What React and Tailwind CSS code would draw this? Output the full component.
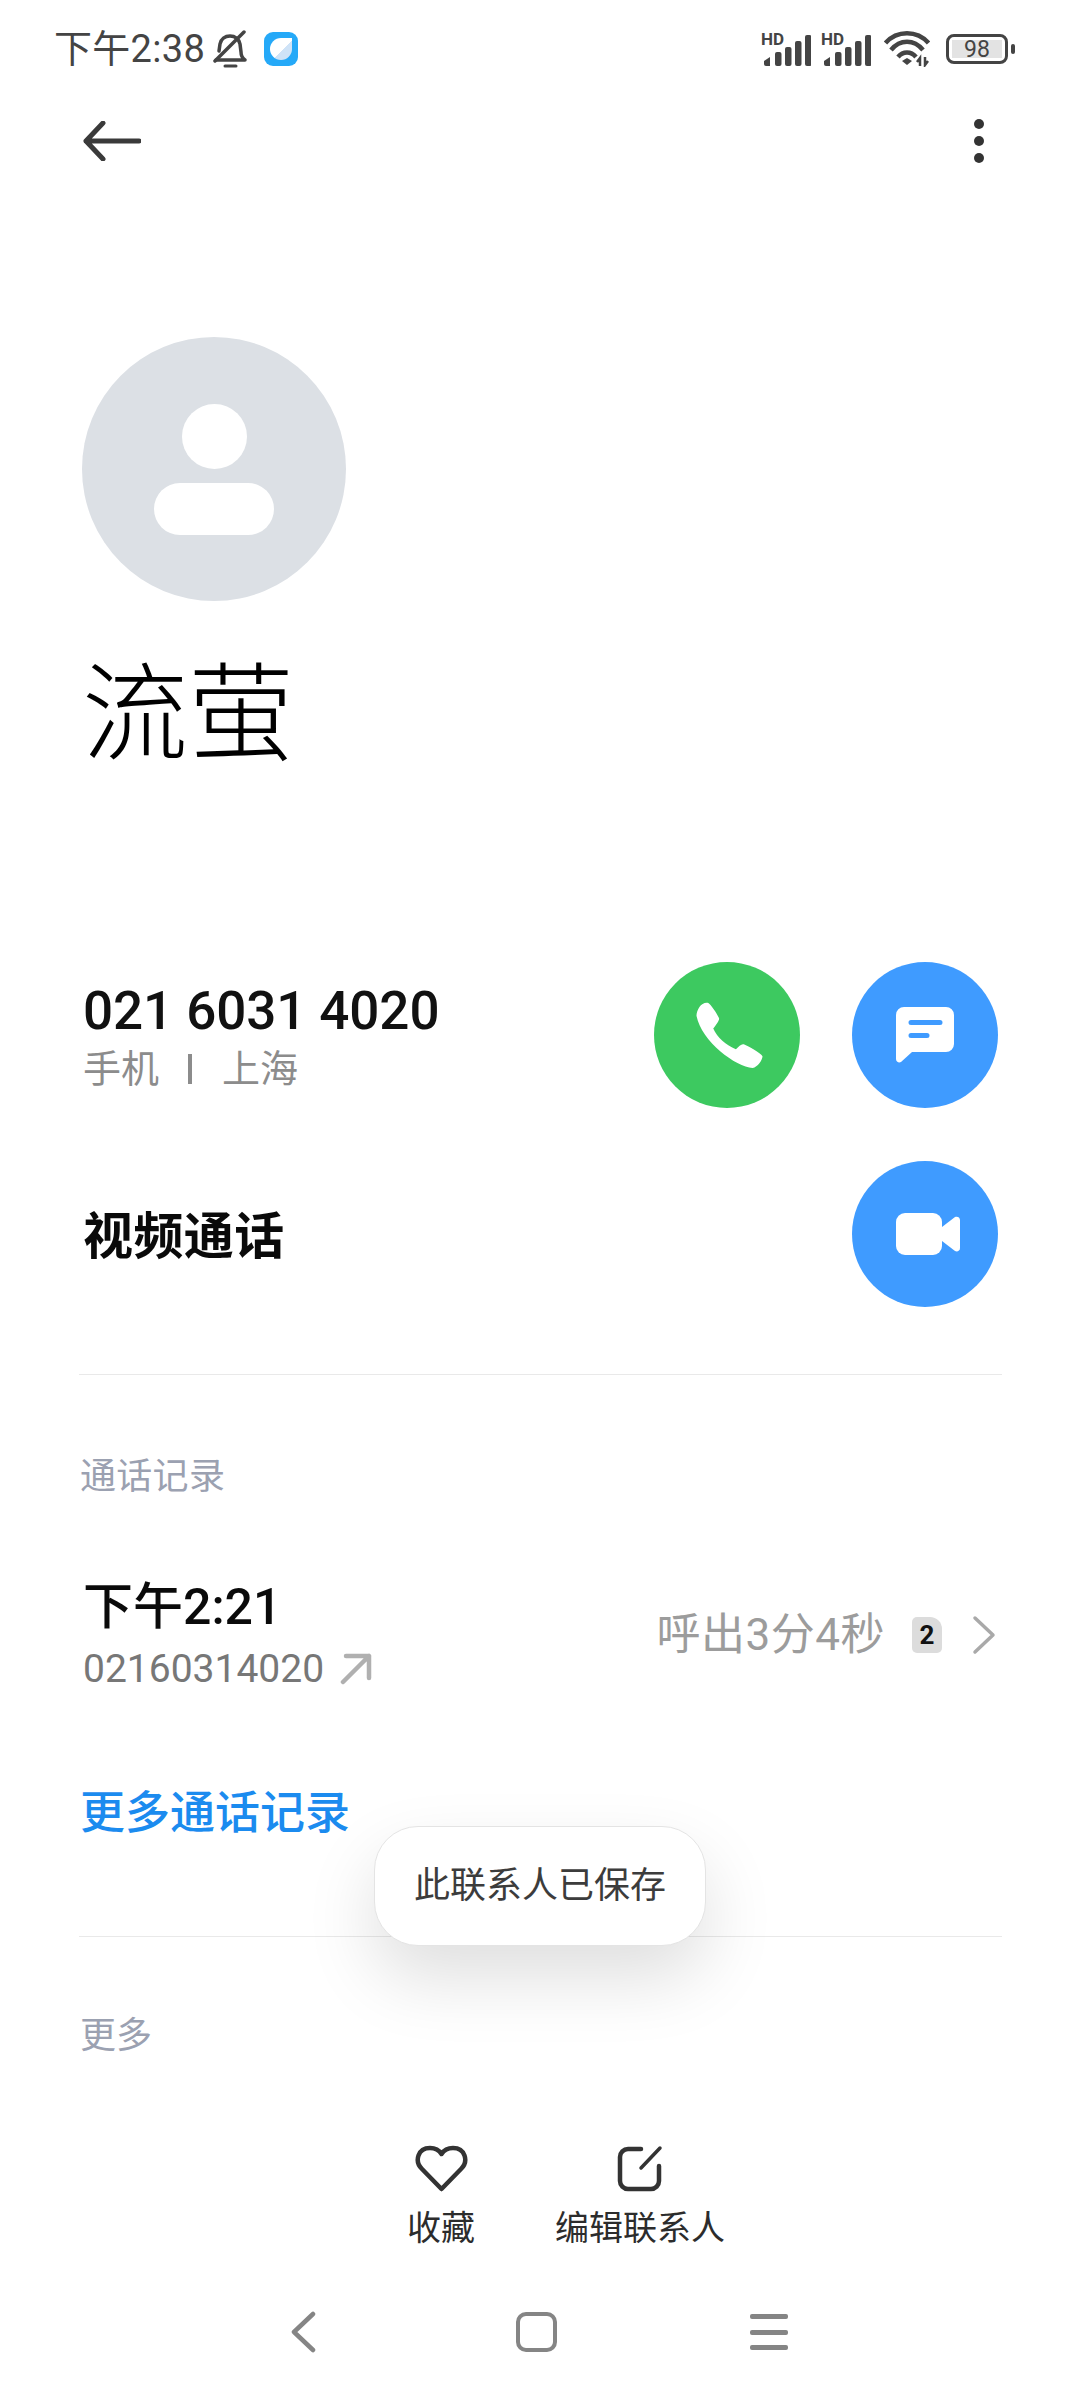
const cjk = "font-['Roboto','Noto_Sans_CJK_SC',sans-serif]";

function Signal() {
  return (
    <div className="relative w-[50px] h-[33px]">
      <span className="absolute left-0 top-[-3px] text-[17px] leading-[18px] font-bold text-[#444] font-['Roboto',sans-serif]">HD</span>
      <svg className="absolute inset-0" width="50" height="33" viewBox="0 0 50 33" fill="#444">
        <path d="M3 28l6-4v9H5a2 2 0 0 1-2-2z" />
        <rect x="14" y="19" width="6.500" height="14" rx="2" />
        <rect x="24" y="14" width="6.500" height="19" rx="2" />
        <rect x="34" y="8" width="6.500" height="25" rx="2" />
        <rect x="44" y="2" width="6.500" height="31" rx="2" />
      </svg>
    </div>
  );
}

function Wifi() {
  return (
    <svg width="46" height="36" viewBox="0 0 46 36" fill="none" stroke="#444" strokeWidth="4.500">
      <path d="M1.500 12C13 -1 33 -1 44.500 12" />
      <path d="M7 19C16 8 30 8 39 19" />
      <path d="M14 26C19 20 27 20 32 26" />
      <path d="M18 30l5-3 5 3-5 4z" fill="#444" stroke="none" />
      <path d="M36 35v-8l-3 4M41 26v8l3-4" strokeWidth="2.500" />
    </svg>
  );
}

function Battery() {
  return (
    <div className="flex items-center">
      <div className="w-[62px] h-[30px] rounded-[8px] border-[3.5px] border-[#444] p-[3px]">
        <div className="h-full bg-[#e3e3e3] flex items-center justify-center text-[23px] leading-none text-[#444] font-['Roboto',sans-serif]">98</div>
      </div>
      <div className="ml-[3px] w-[4px] h-[10px] rounded-[2px] bg-[#444]" />
    </div>
  );
}

function Round({ color, children }) {
  return <div className={`w-[146px] h-[146px] rounded-full flex items-center justify-center ${color}`}>{children}</div>;
}

export default function App() {
  return (
    <div className={`relative w-[1080px] h-[2400px] overflow-hidden bg-white ${cjk}`}>
      {/* status bar */}
      <div className="h-[98px] flex items-center justify-between pl-[54px] pr-[65px]">
        <div className="flex items-center">
          <span className="text-[38px] tracking-[0.3px] leading-none text-[#444]">下午2:38</span>
          <svg className="ml-[7px]" width="37" height="38" viewBox="0 0 35 38" fill="none" stroke="#444" strokeWidth="3.500" strokeLinecap="round" strokeLinejoin="round">
            <path d="M3 30h29c-3-2-4-5-4-8l-1-8c-1-5-5-8-10-8s-9 3-10 8l-1 7" />
            <path d="M2 31L31 2" />
            <path d="M12 36h11" strokeWidth="3" />
          </svg>
          <div className="ml-[15px] w-[34px] h-[34px] rounded-[9px] bg-[#25a9f8] flex items-center justify-center">
            <div className="w-[22px] h-[22px] rounded-full rounded-tr-[8px] bg-[linear-gradient(135deg,#ffffff_55%,#cfe3f7_55%)]" />
          </div>
        </div>
        <div className="flex items-center">
          <Signal />
          <div className="ml-[10px]"><Signal /></div>
          <div className="ml-[13px]"><Wifi /></div>
          <div className="ml-[16px]"><Battery /></div>
        </div>
      </div>

      {/* app bar */}
      <div className="h-[86px] flex items-center justify-between pl-[83px] pr-[96px]">
        <svg width="58" height="40" viewBox="0 0 58 40" fill="none" stroke="#3a3a3a" strokeWidth="5" strokeLinecap="round" strokeLinejoin="round">
          <path d="M56 20H3M20 2L3 20l17 18" />
        </svg>
        <div className="flex flex-col gap-[7px]">
          <div className="w-[10px] h-[10px] rounded-full bg-[#333]" />
          <div className="w-[10px] h-[10px] rounded-full bg-[#333]" />
          <div className="w-[10px] h-[10px] rounded-full bg-[#333]" />
        </div>
      </div>

      {/* avatar */}
      <div className="mt-[153px] ml-[82px] w-[264px] h-[264px] rounded-full bg-[#dce0e5] flex flex-col items-center">
        <div className="mt-[67px] ml-[1px] w-[65px] h-[65px] rounded-full bg-white" />
        <div className="mt-[14px] w-[120px] h-[52px] rounded-[26px] bg-white" />
      </div>

      {/* name */}
      <div className="mt-[54px] ml-[82px] h-[120px] flex items-center text-[106px] leading-none font-light text-black">流萤</div>

      {/* actions */}
      <div className="mt-[187px] pl-[83px] pr-[82px] flex items-center justify-between">
        <div className="pt-[2px]">
          <div className="text-[53px] leading-[62px] font-medium tracking-[-0.1px] text-[#111]">021 6031 4020</div>
          <div className="mt-[4px] flex items-center text-[38px] leading-[46px] text-[#8c8c8c]">
            <span>手机</span>
            <span className="ml-[29px] w-[4px] h-[30px] bg-[#8c8c8c]" />
            <span className="ml-[30px]">上海</span>
          </div>
        </div>
        <div className="flex gap-[52px]">
          <Round color="bg-[#3dc960]">
            <svg className="ml-[5px]" width="67" height="67" viewBox="0 0 67 68" fill="white">
              <path d="M3 5C5 2 9 0 12 1C14 2 22 13 23 17C23 19 20 23 17 27C21 36 30 44 40 48C43 45 46 42 48 43C53 45 65 52 67 55C67 59 62 66 57 67C40 66 5 40 0 14C0 11 1 8 3 5Z" />
            </svg>
          </Round>
          <Round color="bg-[#3f9bff]">
            <svg width="58" height="56" viewBox="0 0 58 56" fill="white">
              <path fillRule="evenodd" d="M8 0h42a8 8 0 0 1 8 8v29a8 8 0 0 1-8 8H16L5 55c-2 1-5 0-5-3V8a8 8 0 0 1 8-8zM15 13a2.500 2.500 0 0 0 0 5h29a2.500 2.500 0 0 0 0-5zM15 26a2.500 2.500 0 0 0 0 5h16a2.500 2.500 0 0 0 0-5z" />
            </svg>
          </Round>
        </div>
      </div>

      <div className="mt-[53px] pl-[83px] pr-[82px] flex items-center justify-between">
        <div className="pt-[6px] text-[50px] tracking-[0.4px] leading-[60px] font-semibold text-[#0a0a0a]">视频通话</div>
        <Round color="bg-[#3f9bff]">
          <svg className="ml-[5px]" width="64" height="42" viewBox="0 0 64 42" fill="white">
            <rect x="0" y="0" width="46" height="42" rx="9" />
            <path d="M46 14L59 4c2-1 5 0 5 3v28c0 3-3 4-5 3L46 28z" />
          </svg>
        </Round>
      </div>

      {/* divider */}
      <div className="mt-[67px] ml-[79px] h-[1px] bg-[#e9e9e9] w-[923px]" />

      {/* call log */}
      <div className="mt-[80px] ml-[80px] text-[36px] tracking-[0.3px] leading-[44px] text-[#9ba1b1]">通话记录</div>

      <div className="mt-[78px] pl-[83px] pr-[84px] flex items-center justify-between">
        <div>
          <div className="text-[50px] leading-[60px] font-medium text-[#0a0a0a]">下午2:21</div>
          <div className="mt-[9px] flex items-center text-[39px] leading-[46px] text-[#777]">
            02160314020
            <svg className="ml-[16px]" width="32" height="32" viewBox="0 0 32 32" fill="none" stroke="#b0b0b0" strokeWidth="4.500" strokeLinecap="round" strokeLinejoin="round">
              <path d="M3 29L29 3M6 3h23v22" />
            </svg>
          </div>
        </div>
        <div className="flex items-center">
          <span className="text-[44px] tracking-[0.5px] leading-none text-[#9c9c9c]">呼出3分4秒</span>
          <div className="ml-[27px] w-[30px] h-[36px] rounded-[5px] rounded-tr-[12px] bg-[#dcdcdc] flex items-center justify-center text-[26px] leading-none font-bold text-[#111]">2</div>
          <svg className="ml-[30px]" width="24" height="40" viewBox="0 0 24 40" fill="none" stroke="#a9a9a9" strokeWidth="3.500" strokeLinecap="round" strokeLinejoin="round">
            <path d="M3 3l18 17L3 37" />
          </svg>
        </div>
      </div>

      <div className="mt-[95px] ml-[80px] text-[45px] leading-[54px] font-medium text-[#1b8bef]">更多通话记录</div>

      {/* divider */}
      <div className="mt-[95px] ml-[79px] h-[1px] bg-[#e9e9e9] w-[923px]" />

      <div className="mt-[77px] ml-[80px] text-[36px] leading-[44px] text-[#9ba1b1]">更多</div>

      {/* bottom actions */}
      <div className="mt-[87px] pl-[341px] flex text-[#2c2c2c]">
        <div className="w-[200px] flex flex-col items-center">
          <svg width="53" height="47" viewBox="0 0 53 47" fill="none" stroke="#333" strokeWidth="4.500" strokeLinejoin="round">
            <path d="M26.500 44L7 24C-1 16 3 3 15 3c5 0 9 2 11.500 6c2.500-4 6.500-6 11.500-6c12 0 16 13 8 21z" />
          </svg>
          <div className="mt-[15px] text-[34px] leading-[42px]">收藏</div>
        </div>
        <div className="w-[198px] flex flex-col items-center">
          <svg width="46" height="47" viewBox="0 0 46 47" fill="none" stroke="#333" strokeWidth="4.500" strokeLinecap="round" strokeLinejoin="round">
            <path d="M24 4H11a8 8 0 0 0-8 8v24a8 8 0 0 0 8 8h23a8 8 0 0 0 8-8V21" />
            <path d="M24 23L43 3" strokeWidth="3.500" />
          </svg>
          <div className="mt-[15px] text-[34px] leading-[42px] whitespace-nowrap">编辑联系人</div>
        </div>
      </div>

      {/* nav bar */}
      <div className="mt-[61px] ml-[291px] w-[497px] h-[44px] flex items-center justify-between">
        <svg width="25" height="42" viewBox="0 0 25 42" fill="none" stroke="#858585" strokeWidth="4.500" strokeLinecap="round" strokeLinejoin="round">
          <path d="M22 3L3 21l19 18" />
        </svg>
        <div className="ml-[6px] w-[41px] h-[40px] rounded-[10px] border-[4.500px] border-[#858585]" />
        <div className="flex flex-col gap-[10.500px]">
          <div className="w-[38px] h-[5px] rounded-[2px] bg-[#858585]" />
          <div className="w-[38px] h-[5px] rounded-[2px] bg-[#858585]" />
          <div className="w-[38px] h-[5px] rounded-[2px] bg-[#858585]" />
        </div>
      </div>

      {/* toast */}
      <div className="absolute left-[374px] top-[1826px] w-[332px] h-[120px] rounded-[44px] bg-white border border-[#e4e4e4] shadow-[0_32px_70px_rgba(0,0,0,0.13)] flex items-center justify-center text-[36px] leading-none text-[#3c3c3c]">
        此联系人已保存
      </div>
    </div>
  );
}
